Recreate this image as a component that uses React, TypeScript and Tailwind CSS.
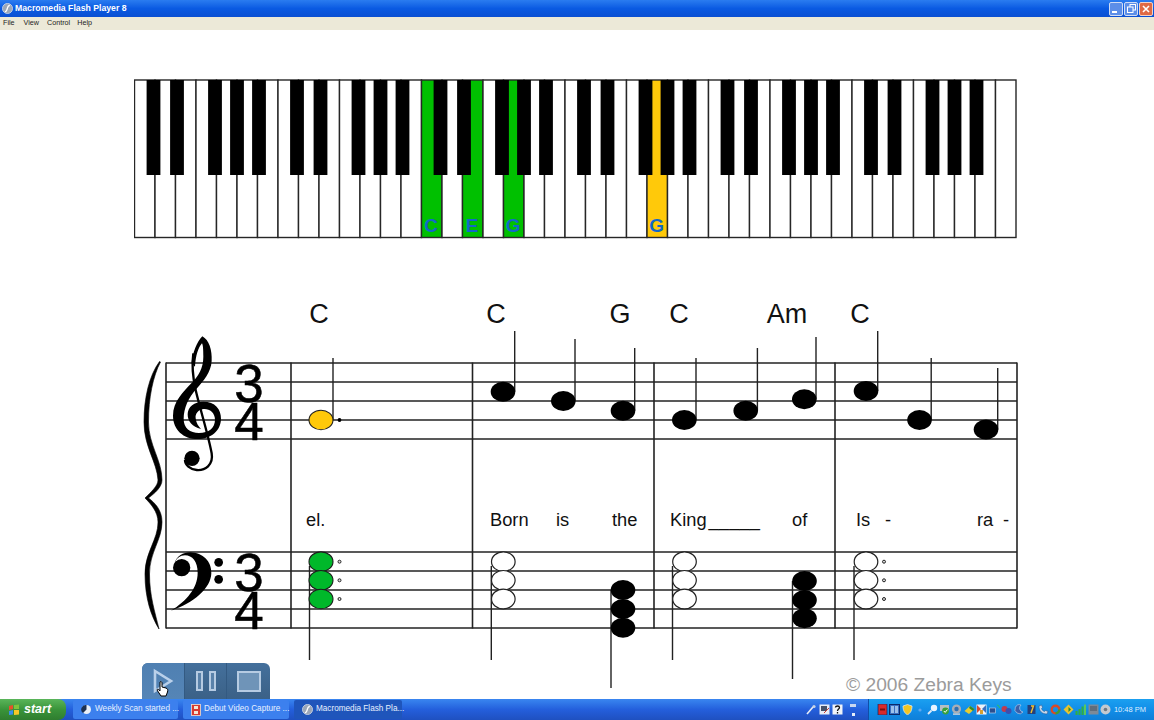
const FONT = "'Liberation Sans', Arial, sans-serif";

const whiteKeys = Array.from({ length: 43 }, (_, i) => i);
const blackOffsets: Record<number, number> = { 1: -1.5, 2: 1.5, 4: -1.5, 5: 0, 6: 1.5 };
const keyX = (i: number) => 134.5 + i * 20.5;
const keyFill: Record<number, string> = { 14: "#00c000", 16: "#00c000", 18: "#00c000", 25: "#ffc90a" };
const keyLabels: [number, string][] = [[14, "C"], [16, "E"], [18, "G"], [25, "G"]];

function Piano() {
  const blacks = whiteKeys.filter((i) => i > 0 && blackOffsets[i % 7] !== undefined);
  return (
    <svg viewBox="134 79 884 160" width={884} height={160} className="block ml-[134px] mt-[49px] shrink-0">
      <rect x={134.5} y={80} width={882} height={157.5} fill="#fff" />
      {whiteKeys.map((i) => (
        <rect key={i} x={keyX(i)} y={80} width={20.5} height={157.5} fill={keyFill[i] ?? "#fff"} stroke="#262626" strokeWidth={1.4} />
      ))}
      {blacks.map((i) => (
        <rect key={i} x={keyX(i) + blackOffsets[i % 7] - 6.9} y={80} width={13.8} height={95} fill="#000" />
      ))}
      {keyLabels.map(([i, t]) => (
        <text key={i} x={keyX(i) + 9.7} y={232} textAnchor="middle" fontFamily={FONT} fontWeight={700} fontSize={19} fill="#1268c8">{t}</text>
      ))}
    </svg>
  );
}

const staffYs = [363, 382, 401, 420, 439];
const bassYs = [552, 571, 590, 609, 628];
const bars = [166, 291, 472.5, 654, 835, 1017];

const upNotes: [number, number, number][] = [
  [503, 391.7, 331], [563.3, 401, 339], [623, 410.7, 348], [684.3, 420, 358], [745.7, 410.7, 348],
  [804.3, 399.3, 337], [866, 391, 331], [919.5, 420, 358], [986, 429.5, 368],
];
const chordsOpen = [503.3, 684.5, 866];
const chordYs = [561.7, 580.3, 599];

function TrebleClef() {
  return (
    <g transform="translate(135 325) scale(0.3333)">
      <path
        d="M202 34 C222 45 232 75 230 108 C228 142 205 168 186 190 C160 218 146 250 146 282 C146 310 165 324 192 324 C222 324 240 308 240 284 C240 262 222 250 205 252 C190 254 180 266 182 280 C184 295 190 304 198 312 C172 306 158 290 158 268 C158 245 178 230 205 230 C240 230 259 252 258 282 C257 318 228 342 188 342 C145 342 114 314 114 272 C114 230 145 200 172 172 C190 152 205 130 205 95 C205 72 204 60 201 55 C190 68 182 90 180 125 L170 115 C172 85 186 50 202 34 Z"
        fill="#000"
      />
      <path d="M175 85 C170 120 172 150 182 195 C196 255 220 330 230 385 C236 420 210 437 185 435 C165 433 150 420 150 405" fill="none" stroke="#000" strokeWidth={7} />
      <circle cx={171} cy={400} r={23} fill="#000" />
    </g>
  );
}

function BassClef() {
  return (
    <g transform="translate(135 480) scale(0.3333)">
      <path
        d="M118 250 C125 228 145 217 165 217 C205 218 230 245 229 280 C228 325 175 370 108 392 C155 362 188 325 188 278 C188 245 172 226 150 226 C135 226 125 235 118 250 Z"
        fill="#000"
      />
      <circle cx={140} cy={263} r={26} fill="#000" />
      <circle cx={251} cy={247} r={13} fill="#000" />
      <circle cx={251} cy={298} r={13} fill="#000" />
    </g>
  );
}

function Score() {
  return (
    <svg viewBox="140 295 880 404" width={880} height={404} className="block ml-[140px] mt-[56px] shrink-0">
      {[...staffYs, ...bassYs].map((y) => (
        <line key={y} x1={166} x2={1017} y1={y} y2={y} stroke="#222" strokeWidth={1.6} />
      ))}
      {bars.map((x) => (
        <line key={x} x1={x} x2={x} y1={362.5} y2={628.5} stroke="#222" strokeWidth={1.6} />
      ))}
      <path
        d="M159.5 361.5 C149 376 144 398 144 422 C144 447 157 462 158 480 C158 486 151 492 145 498 C151 504 158 512 158 522 C158 540 145 552 145 574 C145 598 151 616 159 629 C155 612 149.5 596 149.5 574 C149.5 552 162 540 162 522 C162 510 155 503 148.5 498 C155 493 162 487 162 480 C162 460 148.5 445 148.5 422 C148.5 398 153 376 160.5 362 Z"
        fill="#000" stroke="#000" strokeWidth={0.6}
      />
      <TrebleClef />
      <BassClef />
      <g fontFamily={FONT} fontSize={53} fill="#000" stroke="#000" strokeWidth={0.5} textAnchor="middle">
        <text x={249} y={402}>3</text>
        <text x={249} y={440}>4</text>
        <text x={249} y={591}>3</text>
        <text x={249} y={629}>4</text>
      </g>

      <g fontFamily={FONT} fontSize={27} fill="#111" textAnchor="middle">
        <text x={319} y={323}>C</text>
        <text x={496} y={323}>C</text>
        <text x={620} y={323}>G</text>
        <text x={679} y={323}>C</text>
        <text x={787} y={323}>Am</text>
        <text x={860} y={323}>C</text>
      </g>

      <g fontFamily={FONT} fontSize={18.3} fill="#111">
        <text x={306} y={526}>el.</text>
        <text x={490} y={526}>Born</text>
        <text x={556} y={526}>is</text>
        <text x={612} y={526}>the</text>
        <text x={670} y={526}>King</text>
        <text x={708.5} y={526} textLength={51.5}>_____</text>
        <text x={792} y={526}>of</text>
        <text x={856} y={526}>Is</text>
        <text x={885} y={526}>-</text>
        <text x={977} y={526}>ra</text>
        <text x={1003} y={526}>-</text>
      </g>

      {/* dotted half note */}
      <line x1={333} x2={333} y1={358} y2={420} stroke="#222" strokeWidth={1.4} />
      <ellipse cx={321} cy={420} rx={12} ry={9.8} fill="#ffc90a" stroke="#222" strokeWidth={1.1} />
      <circle cx={339.5} cy={420} r={1.9} fill="#000" />

      {upNotes.map(([x, y, top]) => (
        <g key={x}>
          <line x1={x + 11.7} x2={x + 11.7} y1={top} y2={y} stroke="#222" strokeWidth={1.4} />
          <ellipse cx={x} cy={y} rx={12.3} ry={10} fill="#000" />
        </g>
      ))}

      {/* bass green chord */}
      <line x1={309.5} x2={309.5} y1={566} y2={660} stroke="#222" strokeWidth={1.4} />
      {chordYs.map((y) => (
        <g key={y}>
          <ellipse cx={321} cy={y} rx={12} ry={9.8} fill="#00b82a" stroke="#1c1c1c" strokeWidth={1.1} />
          <circle cx={339.5} cy={y} r={1.5} fill="#ddd" stroke="#222" strokeWidth={1} />
        </g>
      ))}

      {/* bass open chords */}
      {chordsOpen.map((x) => (
        <g key={x}>
          <line x1={x - 12} x2={x - 12} y1={566} y2={660} stroke="#222" strokeWidth={1.4} />
          {chordYs.map((y) => (
            <ellipse key={y} cx={x} cy={y} rx={11.8} ry={9.8} fill="#fff" stroke="#222" strokeWidth={1.2} />
          ))}
        </g>
      ))}
      {chordYs.map((y) => (
        <circle key={y} cx={884} cy={y} r={1.5} fill="#ddd" stroke="#222" strokeWidth={1} />
      ))}

      {/* bass filled chords */}
      <line x1={611} x2={611} y1={590} y2={688} stroke="#222" strokeWidth={1.4} />
      {[590, 609, 627.7].map((y) => (
        <ellipse key={y} cx={623} cy={y} rx={12.3} ry={10} fill="#000" />
      ))}
      <line x1={792.5} x2={792.5} y1={581} y2={679} stroke="#222" strokeWidth={1.4} />
      {[581, 600, 618.3].map((y) => (
        <ellipse key={y} cx={804.5} cy={y} rx={12.3} ry={10} fill="#000" />
      ))}

      <text x={846} y={691} fontFamily={FONT} fontSize={19.2} fill="#9b9b9b">© 2006 Zebra Keys</text>
    </svg>
  );
}

function PlayerControls() {
  return (
    <div className="absolute left-[142px] bottom-0 h-[36px] w-[128px] flex rounded-t-[6px] bg-gradient-to-b from-[#44709c] to-[#3b6187] overflow-hidden">
      <div className="w-[43px] flex items-center justify-center bg-gradient-to-b from-[#4f80b2] to-[#5585b6] border-r border-[#335a82]">
        <svg width={24} height={26} viewBox="0 0 24 26">
          <path d="M4 3 L20 13 L4 23 Z" fill="none" stroke="#b9d0ea" strokeWidth={2.6} />
        </svg>
      </div>
      <div className="w-[42px] flex items-center justify-center gap-[6px] border-r border-[#335a82]">
        <div className="w-[7px] h-[20px] border-2 border-[#b6cbe2] bg-[#5a82aa]" />
        <div className="w-[7px] h-[20px] border-2 border-[#b6cbe2] bg-[#5a82aa]" />
      </div>
      <div className="flex-1 flex items-center justify-center">
        <div className="w-[24px] h-[21px] border-2 border-[#b6cbe2] bg-[#6f94b8]" />
      </div>
      <svg className="absolute left-[14px] top-[18px]" width={13} height={16} viewBox="0 0 13 16">
        <path d="M4 1 C5 0 6 1 6 2 L6 6 L10 7 C12 8 12 9 11.5 11 L10 15 L5 15 L1 9 C1 8 2 8 3 9 L4 10 Z" fill="#fff" stroke="#000" strokeWidth={1} />
      </svg>
    </div>
  );
}

function FlashIcon({ size = 11 }: { size?: number }) {
  return (
    <svg width={size} height={size} viewBox="0 0 12 12" className="shrink-0">
      <circle cx={6} cy={6} r={5.5} fill="#9aa6b8" stroke="#dfe5ee" strokeWidth={0.8} />
      <path d="M8.5 2.5 C6 3 6 5 5.5 7 C5 9 4.5 9.3 3.2 9.6" fill="none" stroke="#fff" strokeWidth={1.5} />
    </svg>
  );
}

function TitleBar() {
  return (
    <div className="h-[17px] shrink-0 flex items-center pl-[2px] pr-[1px] bg-gradient-to-b from-[#2a7cf0] via-[#0a5ae2] to-[#0a4fd2]">
      <FlashIcon />
      <span className="ml-[2px] text-[8.7px] font-bold text-white whitespace-nowrap" style={{ fontFamily: FONT }}>
        Macromedia Flash Player 8
      </span>
      <div className="ml-auto flex items-center gap-[1px]">
        <div className="w-[14px] h-[14px] rounded-[2px] bg-[#5c8ee8] border border-[#cfdcf5] flex items-end justify-start p-[2px]">
          <div className="w-[5px] h-[2px] bg-white" />
        </div>
        <div className="w-[14px] h-[14px] rounded-[2px] bg-[#5c8ee8] border border-[#cfdcf5] flex items-center justify-center">
          <svg width={9} height={9} viewBox="0 0 9 9">
            <rect x={3} y={0.5} width={5.5} height={5.5} fill="none" stroke="#fff" />
            <rect x={0.5} y={3} width={5.5} height={5.5} fill="#5c8ee8" stroke="#fff" />
          </svg>
        </div>
        <div className="w-[14px] h-[14px] rounded-[2px] bg-[#df6a45] border border-[#f0d2c8] flex items-center justify-center">
          <svg width={8} height={8} viewBox="0 0 8 8">
            <path d="M1 1 L7 7 M7 1 L1 7" stroke="#fff" strokeWidth={1.6} />
          </svg>
        </div>
      </div>
    </div>
  );
}

function MenuBar() {
  return (
    <div className="h-[13px] shrink-0 flex items-center bg-[#ece9d8] text-[7.2px] text-[#222] pl-[3px]" style={{ fontFamily: FONT }}>
      <span>File</span>
      <span className="ml-[9px]">View</span>
      <span className="ml-[8px]">Control</span>
      <span className="ml-[7px]">Help</span>
    </div>
  );
}

function TaskButton({ active, w, icon, label }: { active?: boolean; w: string; icon: React.ReactNode; label: string }) {
  return (
    <div className={`${w} h-[19px] shrink-0 rounded-[2px] flex items-center pl-[8px] gap-[3px] text-[8.2px] whitespace-nowrap ${active ? "bg-[#1f55bb] text-[#e8f0ff]" : "bg-[#3c80ee] text-[#e8f0ff]"}`} style={{ fontFamily: FONT }}>
      {icon}
      <span>{label}</span>
    </div>
  );
}

const trayIcons: React.ReactNode[] = [
  <g key="a"><rect x={1} y={0} width={9} height={11} fill="#d82a2a" stroke="#0b2a6a" strokeWidth={0.7} /><rect x={3} y={4.5} width={5} height={2} fill="#7a1010" /></g>,
  <g key="b"><rect x={0.5} y={0.5} width={10} height={10} fill="#3a6fc0" stroke="#0b2a6a" /><rect x={2} y={2} width={3} height={7} fill="#9cc0ea" /><rect x={6} y={2} width={3} height={7} fill="#9cc0ea" /></g>,
  <path key="c" d="M5.5 0.5 L10 2 C10 7 8 9.5 5.5 10.8 C3 9.5 1 7 1 2 Z" fill="#f2c522" stroke="#e8eef8" strokeWidth={0.7} />,
  <circle key="d" cx={6} cy={6} r={1.6} fill="#5da7ee" />,
  <g key="e"><circle cx={7} cy={4} r={3.2} fill="#eaf4ff" /><path d="M4.5 6.5 L1 10" stroke="#dce8f8" strokeWidth={1.8} /></g>,
  <g key="f"><rect x={1} y={1} width={9} height={6} fill="#b8bec4" /><circle cx={6.5} cy={7} r={3.4} fill="#3aa03a" /><path d="M4.8 7 L6.2 8.4 L8.4 5.6" stroke="#fff" strokeWidth={1} fill="none" /></g>,
  <g key="g"><circle cx={5.5} cy={5} r={4.6} fill="#a8aeb6" /><circle cx={5.5} cy={5} r={2.2} fill="#2f6fb0" /><rect x={2} y={9.4} width={7} height={1.4} fill="#d0d4da" /></g>,
  <g key="h"><path d="M0.5 7 L6 2 L10.5 5 L5 10 Z" fill="#e8cc30" /><path d="M6 2 L10.5 5 L9 7 L5 4 Z" fill="#2e8a30" /></g>,
  <g key="i"><rect x={0.5} y={0.5} width={10} height={10} fill="#eef2f8" /><path d="M1 1 L5 5 L1 9 Z" fill="#d84a30" /><path d="M10 1 L6 5 L10 9 Z" fill="#3a6fc0" /><rect x={4} y={6} width={3} height={4} fill="#d8a030" /></g>,
  <g key="j"><rect x={0.5} y={4} width={6} height={5} fill="#2a4f90" stroke="#d0dcf0" strokeWidth={0.6} /><path d="M8 1 A3 3 0 0 1 10.5 4" stroke="#30c060" fill="none" strokeWidth={1} /></g>,
  <g key="k"><circle cx={3.5} cy={5} r={3} fill="#c03a50" /><circle cx={7.5} cy={7} r={3} fill="#3a4fb0" /></g>,
  <path key="l" d="M8 1 A4.5 4.5 0 1 0 10 8 A4 4 0 0 1 8 1 Z" fill="#3a5fa8" stroke="#c8d8f0" strokeWidth={0.6} />,
  <g key="m"><rect x={1.5} y={1} width={8} height={9} fill="#24407c" /><path d="M5 2 L7.5 2 L5 9" stroke="#f0c030" strokeWidth={1.4} fill="none" /></g>,
  <path key="n" d="M1 2 C1 7 4 10 9 10 L10 7.5 L7.5 6.5 L6.5 7.5 C5 7 4 6 3.5 4.5 L4.5 3.5 L3.5 1 Z" fill="#c8d8e8" stroke="#28508a" strokeWidth={0.5} />,
  <g key="o"><circle cx={5.5} cy={5.5} r={3.8} fill="none" stroke="#d84a28" strokeWidth={2.4} /><path d="M5.5 9.3 A3.8 3.8 0 0 0 9.3 5.5" stroke="#38a038" strokeWidth={2.4} fill="none" /></g>,
  <g key="p"><path d="M5.5 0.5 L10.5 5.5 L5.5 10.5 L0.5 5.5 Z" fill="#e8c430" /><path d="M5.5 3 L8 5.5 L5.5 8 Z" fill="#2e8a30" /></g>,
  <g key="q"><rect x={0.5} y={7} width={2} height={4} fill="#30b040" /><rect x={3.5} y={5} width={2} height={6} fill="#30b040" /><rect x={6.5} y={2.5} width={2} height={8.5} fill="#30b040" /><rect x={9} y={0.5} width={2} height={10.5} fill="#58c860" /></g>,
  <g key="r"><rect x={0.5} y={0.5} width={10} height={10} fill="#7c8a98" /><rect x={2} y={2} width={7} height={5} fill="#5f6d7c" /></g>,
  <g key="s"><circle cx={5.5} cy={5.5} r={5} fill="#c4c9cf" /><circle cx={5.5} cy={5.5} r={1.8} fill="#6f7882" /></g>,
];

function Taskbar() {
  return (
    <div className="h-[21px] shrink-0 flex items-center bg-gradient-to-b from-[#3a86f0] via-[#245fdc] to-[#1f50c0]">
      <div className="h-[21px] w-[66px] shrink-0 rounded-r-[8px] flex items-center pl-[8px] gap-[4px] bg-gradient-to-b from-[#5ab55a] via-[#3a943a] to-[#2f7d2f]">
        <svg width={12} height={12} viewBox="0 0 12 12" className="shrink-0">
          <path d="M1 2 L5 1 L5 5 L1 6 Z" fill="#e8502a" />
          <path d="M6 1 L11 0.5 L11 5 L6 5 Z" fill="#7ec43c" />
          <path d="M1 7 L5 6 L5 10.5 L1 11 Z" fill="#3a8fe8" />
          <path d="M6 6 L11 6 L11 10.5 L6 11 Z" fill="#f5c828" />
        </svg>
        <span className="text-[12.5px] font-bold italic text-white" style={{ fontFamily: FONT }}>start</span>
      </div>
      <div className="ml-[7px] flex items-center gap-[5px]">
        <TaskButton
          w="w-[105px]"
          label="Weekly Scan started ..."
          icon={
            <svg width={11} height={11} viewBox="0 0 11 11" className="shrink-0">
              <circle cx={5.5} cy={5.5} r={4.5} fill="#e8eef8" />
              <path d="M5.5 1 A4.5 4.5 0 0 0 2 9 L5.5 5.5 Z" fill="#1c2f50" />
            </svg>
          }
        />
        <TaskButton
          w="w-[106px]"
          label="Debut Video Capture ..."
          icon={
            <svg width={10} height={12} viewBox="0 0 10 12" className="shrink-0">
              <rect x={0.5} y={0.5} width={9} height={11} fill="#d83a30" stroke="#f0e0d0" strokeWidth={0.8} />
              <rect x={3} y={2} width={4} height={3} fill="#f3e5d5" />
              <rect x={3} y={7} width={4} height={3} fill="#f3e5d5" />
            </svg>
          }
        />
        <TaskButton w="w-[108px]" active label="Macromedia Flash Pla..." icon={<FlashIcon />} />
      </div>
      <div className="ml-auto mr-[11px] flex items-center">
        <svg width={11} height={12} viewBox="0 0 11 12" className="shrink-0">
          <path d="M2 10 L8 3" stroke="#e6edf8" strokeWidth={1.6} />
          <circle cx={9} cy={2.5} r={1.6} fill="#c9d4e4" />
        </svg>
        <svg width={11} height={11} viewBox="0 0 11 11" className="shrink-0 ml-[3px]">
          <rect x={0.5} y={0.5} width={10} height={10} fill="#e6ecf6" />
          <rect x={2} y={2} width={6} height={5} fill="#44516a" />
          <path d="M5 9 L10 4" stroke="#c83a30" strokeWidth={1} />
        </svg>
        <svg width={11} height={11} viewBox="0 0 11 11" className="shrink-0 ml-[2px]">
          <rect x={0.5} y={0.5} width={10} height={10} fill="#eef2f8" />
          <path d="M3.5 3.5 C3.5 1.5 7.5 1.5 7.5 3.5 C7.5 5 5.5 5 5.5 7 M5.5 8 L5.5 9.5" stroke="#111" strokeWidth={1.3} fill="none" />
        </svg>
        <svg width={8} height={14} viewBox="0 0 8 14" className="shrink-0 ml-[6px]">
          <rect x={1} y={1} width={6} height={3} fill="#c9d8f0" />
          <rect x={3} y={10} width={3} height={3} fill="#e6eef9" />
        </svg>
      </div>
      <div className="h-[21px] w-[286px] shrink-0 flex items-center pl-[8px] pr-[8px] gap-[1.4px] bg-gradient-to-b from-[#1ba0f0] via-[#128ee8] to-[#0f7fd8] border-l border-[#0f4fa8]">
        {trayIcons.map((ic, i) => (
          <svg key={i} width={11} height={11} viewBox="0 0 11 11" className="shrink-0">{ic}</svg>
        ))}
        <span className="ml-auto text-[7.5px] text-[#dfeeff] whitespace-nowrap" style={{ fontFamily: FONT }}>10:48 PM</span>
      </div>
    </div>
  );
}

export default function App() {
  return (
    <div className="w-[1154px] h-[720px] flex flex-col overflow-hidden bg-white">
      <TitleBar />
      <MenuBar />
      <main className="relative flex-1 min-h-0 flex flex-col bg-white">
        <Piano />
        <Score />
        <PlayerControls />
      </main>
      <Taskbar />
    </div>
  );
}
